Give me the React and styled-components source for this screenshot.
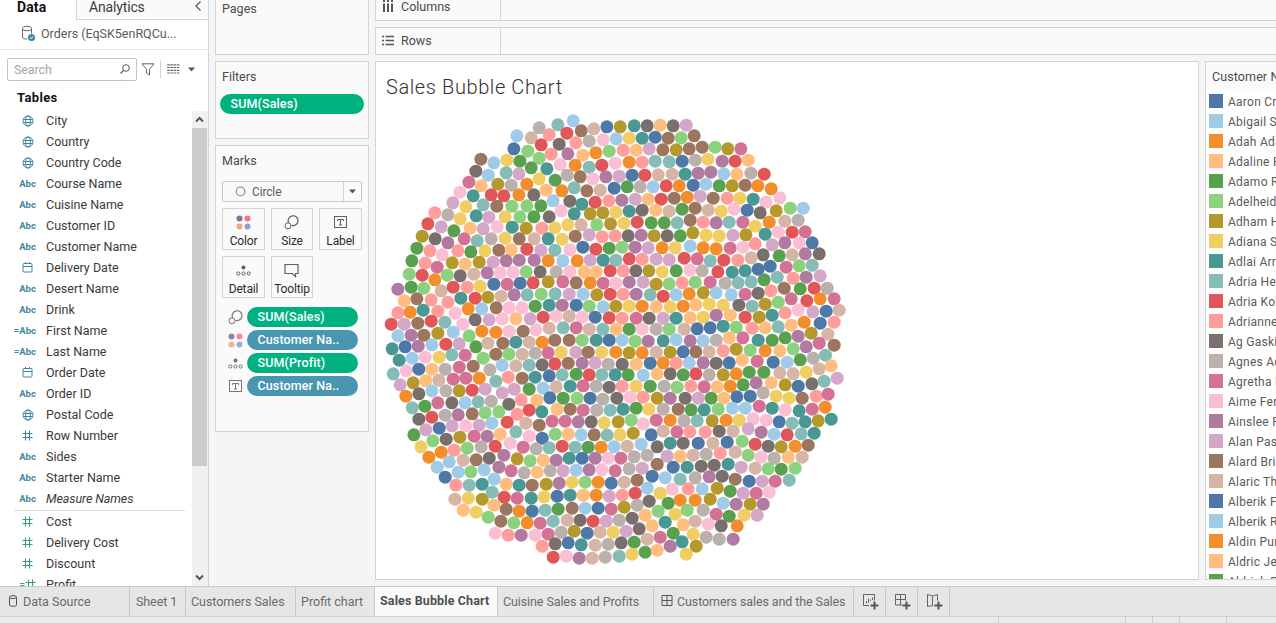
import React from "react";
import styled, { createGlobalStyle, css } from "styled-components";

const GlobalStyle = createGlobalStyle`
  * { box-sizing: border-box; }
  body {
    margin: 0;
    overflow: hidden;
    background: #f5f5f5;
    font-family: Roboto, "Liberation Sans", sans-serif;
    font-size: 13px;
    color: #333;
  }
`;

const LINE = "#d4d4d4";

const Page = styled.div`
  display: flex;
  flex-direction: column;
  width: 1276px;
  height: 623px;
  overflow: hidden;
`;

const Workspace = styled.div`
  display: flex;
  height: 586px;
  overflow: hidden;
`;

/* ---------- data pane ---------- */

const DataPane = styled.aside`
  display: flex;
  flex-direction: column;
  width: 209px;
  flex: none;
  background: #fff;
  border-right: 1px solid ${LINE};
`;

const PaneTabs = styled.div`
  display: flex;
  height: 20px;
`;

const PaneTab = styled.div`
  display: flex;
  align-items: flex-start;
  font-size: 14px;
  ${(p) =>
    p.$active
      ? css`
          width: 76px;
          padding-left: 17px;
          font-weight: 700;
          letter-spacing: 0.1px;
          color: #111;
          line-height: 14px;
        `
      : css`
          flex: 1;
          justify-content: space-between;
          padding-left: 12px;
          padding-right: 6px;
          line-height: 14px;
          letter-spacing: -0.15px;
          color: #3c3c3c;
          background: #fafafa;
          border-left: 1px solid ${LINE};
          border-bottom: 1px solid ${LINE};
        `}
`;

const SourceRow = styled.div`
  display: flex;
  align-items: center;
  gap: 5px;
  height: 30px;
  padding: 0 0 2px 21px;
  border-bottom: 1px solid #e2e2e2;
  color: #5a5a5a;
  font-size: 12.5px;
  letter-spacing: 0;
`;

const SearchRow = styled.div`
  display: flex;
  align-items: center;
  height: 24px;
  margin: 7px 0 0 7px;
`;

const SearchBox = styled.div`
  display: flex;
  align-items: center;
  justify-content: space-between;
  width: 130px;
  height: 23px;
  padding: 0 6px 0 6px;
  border: 1px solid #c4c4c4;
  border-radius: 2px;
  color: #a6a6a6;
  font-size: 12.5px;
  letter-spacing: -0.1px;
`;

const ToolIcons = styled.div`
  display: flex;
  align-items: center;
  margin-left: 4px;
`;

const ThinRule = styled.div`
  width: 1px;
  height: 18px;
  margin: 0 6px 0 5px;
  background: ${LINE};
`;

const TablesHeading = styled.div`
  height: 30px;
  padding-left: 17px;
  line-height: 34px;
  font-weight: 700;
  color: #111;
  letter-spacing: 0.35px;
`;

const FieldArea = styled.div`
  display: flex;
  flex: 1;
  min-height: 0;
`;

const FieldList = styled.div`
  flex: 1;
  overflow: hidden;
`;

const Field = styled.div`
  display: flex;
  align-items: center;
  height: 21px;
  padding-left: 14px;
  padding-bottom: 2px;
  color: #3a3a3a;
  font-size: 12.5px;
  letter-spacing: ${(p) => (p.$italic ? -0.1 : 0)}px;
  font-style: ${(p) => (p.$italic ? "italic" : "normal")};
`;

const FieldIcon = styled.span`
  display: flex;
  align-items: center;
  justify-content: ${(p) => (p.$calc ? "flex-end" : "center")};
  width: ${(p) => (p.$calc ? 22 : 27)}px;
  margin-right: ${(p) => (p.$calc ? 10 : 5)}px;
  font-size: 9.5px;
  font-weight: 700;
  font-style: normal;
  letter-spacing: 0;
  white-space: nowrap;
  color: ${(p) => p.$color};
`;

const FieldDivider = styled.div`
  height: 1px;
  margin: 0 7px 1px 14px;
  background: #dcdcdc;
`;

const ScrollTrack = styled.div`
  display: flex;
  flex-direction: column;
  align-items: flex-start;
  width: 16px;
  background: #f0f0f0;
`;

const ScrollButton = styled.div`
  display: flex;
  align-items: center;
  justify-content: center;
  width: 15px;
  height: 17px;
`;

const ScrollThumb = styled.div`
  width: 15px;
  height: 338px;
  margin-bottom: auto;
  background: #cbcbcb;
`;

/* ---------- shelf cards ---------- */

const CardColumn = styled.div`
  display: flex;
  flex-direction: column;
  gap: 6px;
  width: 154px;
  flex: none;
  margin-left: 6px;
`;

const Card = styled.section`
  height: ${(p) => p.$h}px;
  padding: ${(p) => p.$pad ?? 7}px 4px 0;
  background: #fafafa;
  border: 1px solid ${LINE};
  border-top-width: ${(p) => (p.$cut ? 0 : 1)}px;
`;

const CardTitle = styled.div`
  height: 16px;
  padding-left: 2px;
  line-height: 16px;
  font-size: 12.5px;
  color: #4a4a4a;
  letter-spacing: 0;
`;

const Pill = styled.div`
  width: ${(p) => p.$w}px;
  height: 20px;
  padding-left: 10.5px;
  border-radius: 10px;
  line-height: 20px;
  font-size: 12.5px;
  font-weight: 500;
  letter-spacing: 0.12px;
  color: #fff;
  background: ${(p) => (p.$measure ? "#00b180" : "#4996b2")};
`;

const FilterPill = styled(Pill)`
  margin: 9px 0 0 0;
`;

const MarkSelect = styled.div`
  display: flex;
  align-items: center;
  width: 140px;
  height: 21px;
  margin: 12px 0 0 2px;
  padding-left: 12px;
  border: 1px solid #c8c8c8;
  border-radius: 2px;
  color: #5a5a5a;
  font-size: 12px;
  letter-spacing: -0.15px;
`;

const MarkName = styled.span`
  flex: 1;
  padding-left: 6px;
`;

const SelectArrow = styled.span`
  display: flex;
  align-items: center;
  justify-content: center;
  width: 18px;
  height: 19px;
  border-left: 1px solid ${LINE};
`;

const MarkButtons = styled.div`
  display: grid;
  grid-template-columns: 43px 42px 43px;
  grid-auto-rows: 42px;
  gap: 6px;
  margin: 6px 0 0 2px;
`;

const MarkButton = styled.div`
  display: flex;
  flex-direction: column;
  align-items: center;
  justify-content: space-between;
  padding: 6px 0 0;
  border: 1px solid ${LINE};
  font-size: 12px;
  letter-spacing: -0.15px;
  line-height: 15px;
  color: #2c2c2c;
  svg { display: block; margin-right: 1px; }
`;

const Encodings = styled.div`
  display: flex;
  flex-direction: column;
  gap: 3px;
  margin-top: 9px;
  padding-left: 8px;
`;

const Encoding = styled.div`
  display: flex;
  align-items: center;
  gap: 4px;
  height: 20px;
  svg { opacity: 0.85; }
`;

/* ---------- view ---------- */

const ViewColumn = styled.div`
  display: flex;
  flex-direction: column;
  gap: 6px;
  flex: 1;
  min-width: 0;
  margin-left: 6px;
`;

const Shelf = styled.div`
  display: flex;
  height: ${(p) => (p.$cut ? 21 : 28)}px;
  background: #fafafa;
  border: 1px solid ${LINE};
  border-right: 0;
  border-top-width: ${(p) => (p.$cut ? 0 : 1)}px;
`;

const ShelfLabel = styled.div`
  display: flex;
  align-items: center;
  gap: 7px;
  width: 125px;
  padding-left: 6px;
  padding-bottom: ${(p) => (p.$cut ? 8 : 2)}px;
  border-right: 1px solid ${LINE};
  font-size: 12.5px;
  color: #4a4a4a;
  letter-spacing: 0;
`;

const ViewRow = styled.div`
  display: flex;
  gap: 6px;
  height: 519px;
`;

const Sheet = styled.div`
  width: 824px;
  flex: none;
  background: #fff;
  border: 1px solid ${LINE};
`;

const SheetTitle = styled.h1`
  height: 43px;
  margin: 0;
  padding: 9px 0 0 10px;
  font-size: 20px;
  line-height: 32px;
  font-weight: 300;
  letter-spacing: 0.6px;
  color: #333;
`;

const Bubbles = styled.svg`
  display: block;
`;

const Legend = styled.div`
  flex: 1;
  min-width: 0;
  overflow: hidden;
  background: #fff;
  border: 1px solid ${LINE};
  border-right: 0;
  white-space: nowrap;
`;

const LegendTitle = styled.div`
  height: 29px;
  padding-left: 6px;
  line-height: 29px;
  background: #fafafa;
  color: #4a4a4a;
  font-size: 12.5px;
  letter-spacing: 0.1px;
`;

const LegendItem = styled.div`
  display: flex;
  align-items: center;
  gap: 5px;
  height: 20px;
  padding: 2px 0 0 3px;
  font-size: 12px;
  letter-spacing: 0.25px;
  color: #5a5a5a;
`;

const Swatch = styled.span`
  flex: none;
  width: 14px;
  height: 14px;
  margin-bottom: 2px;
  background: ${(p) => p.$color};
`;

/* ---------- bottom ---------- */

const SheetTabs = styled.nav`
  display: flex;
  height: 31px;
  background: #e6e6e6;
  border-top: 1px solid #c8c8c8;
  border-bottom: 1px solid #cfcfcf;
`;

const SheetTab = styled.div`
  display: flex;
  align-items: center;
  gap: ${(p) => p.$gap ?? 4}px;
  width: ${(p) => p.$w}px;
  padding-left: ${(p) => p.$pad ?? 5}px;
  border-right: 1px solid #c8c8c8;
  font-size: 12.5px;
  letter-spacing: ${(p) => p.$ls ?? 0}px;
  white-space: nowrap;
  color: ${(p) => (p.$active ? "#4f4f4f" : "#6a6a6a")};
  font-weight: ${(p) => (p.$active ? 700 : 400)};
  background: ${(p) => (p.$active ? "#fafafa" : "transparent")};
  padding-bottom: ${(p) => (p.$active ? 2 : 0)}px;
`;

const StatusBar = styled.footer`
  display: flex;
  flex: 1;
  background: #ebebeb;
`;

const StatusCell = styled.div`
  width: ${(p) => p.$w}px;
  border-right: 1px solid #cfcfcf;
`;

/* ---------- icons ---------- */

const Globe = () => (
  <svg width="12" height="12" viewBox="0 0 12 12" fill="none" stroke="#3f86a0">
    <circle cx="6" cy="6" r="5" />
    <ellipse cx="6" cy="6" rx="2.3" ry="5" />
    <path d="M1.2 4.5h9.6M1.2 7.5h9.6" />
  </svg>
);

const Hash = ({ color }) => (
  <svg width="11" height="11" viewBox="0 0 11 11" stroke={color} strokeWidth="1.1">
    <path d="M3.5 .5v10M7.5 .5v10M.5 3.5h10M.5 7.5h10" />
  </svg>
);

const Calendar = () => (
  <svg width="11" height="11" viewBox="0 0 11 11" fill="none" stroke="#3f86a0">
    <rect x="1" y="1.500" width="9" height="8.500" rx="1" />
    <path d="M1 4.500h9M3.500 0v2M7.500 0v2" />
  </svg>
);

const Database = () => (
  <svg width="15" height="17" viewBox="0 0 15 17" fill="none" stroke="#666">
    <path d="M1.5 3.5v8.7c0 1.2 2.2 1.9 4.5 1.9M10.500 3.500v5" />
    <ellipse cx="6" cy="3.500" rx="4.500" ry="2.200" />
    <circle cx="10.500" cy="12.500" r="3.600" fill="#3f86a8" stroke="none" />
    <path d="M8.900 12.500l1.200 1.200 2-2.300" stroke="#fff" />
  </svg>
);

const Magnifier = () => (
  <svg width="10" height="10" viewBox="0 0 10 10" fill="none" stroke="#555">
    <circle cx="6" cy="4" r="3.300" />
    <path d="M3.600 6.400L.5 9.500" strokeWidth="1.200" />
  </svg>
);

const Funnel = () => (
  <svg width="14" height="13" viewBox="0 0 14 13" fill="none" stroke="#666">
    <path d="M1 .8h12L8.500 6.300v5.700L5.500 10V6.300z" />
  </svg>
);

const ListGrid = () => (
  <svg width="13" height="10" viewBox="0 0 13 10" stroke="#666" strokeWidth="1.200" strokeDasharray="2.500 .7">
    <path d="M.2 .8h12.500M.2 3.500h12.500M.2 6.300h12.500M.2 9h12.500" />
  </svg>
);

const Caret = () => (
  <svg width="7" height="5" viewBox="0 0 7 5" fill="#555">
    <path d="M0 .5h7L3.500 4.500z" />
  </svg>
);

const ViewCaret = styled.span`
  display: flex;
  margin-left: 8px;
`;

const Chevron = ({ d, w, h, sw = 1.2 }) => (
  <svg width={w} height={h} viewBox={`0 0 ${w} ${h}`} fill="none" stroke="#555" strokeWidth={sw}>
    <path d={d} />
  </svg>
);

const ColorDots = () => (
  <svg width="15" height="15" viewBox="0 0 15 15">
    <circle cx="3.500" cy="3.500" r="3" fill="#84709b" />
    <circle cx="11.500" cy="3.500" r="3" fill="#fb7185" />
    <circle cx="3.500" cy="11.500" r="3" fill="#f4a77c" />
    <circle cx="11.500" cy="11.500" r="3" fill="#81a5cf" />
  </svg>
);

const SizeIcon = () => (
  <svg width="15" height="15" viewBox="0 0 15 15" fill="none" stroke="#5f5f5f">
    <path d="M4.700 7.800A4.900 4.900 0 1 1 7.300 10.200" strokeWidth="1.200" />
    <circle cx="4" cy="10.800" r="3" />
  </svg>
);

const LabelIcon = () => (
  <svg width="15" height="15" viewBox="0 0 15 15" fill="none" stroke="#5f5f5f">
    <rect x="1.500" y="1.500" width="12" height="11" />
    <path d="M4.500 6v-1.500h6v1.500M7.500 4.500v5.500M6 10h3" />
  </svg>
);

const DetailIcon = () => (
  <svg width="15" height="15" viewBox="0 0 15 15" fill="none" stroke="#5f5f5f">
    <circle cx="7.500" cy="4.500" r="2" fill="#5f5f5f" stroke="none" />
    <circle cx="2.300" cy="10.500" r="1.600" />
    <circle cx="7.500" cy="10.500" r="1.600" />
    <circle cx="12.700" cy="10.500" r="1.600" />
  </svg>
);

const TooltipIcon = () => (
  <svg width="15" height="15" viewBox="0 0 15 15" fill="none" stroke="#5f5f5f" strokeWidth="1.200">
    <path d="M1 1.500h13v9h-2.500v3L8.300 10.500H1z" />
  </svg>
);

const ColumnsIcon = () => (
  <svg width="12" height="12" viewBox="0 0 12 12" stroke="#555" strokeWidth="2">
    <path d="M2 0v2M6 0v2M10 0v2M2 3.500v8.500M6 3.500v8.500M10 3.500v8.500" />
  </svg>
);

const RowsIcon = () => (
  <svg width="12" height="11" viewBox="0 0 12 11" stroke="#555" strokeWidth="1.700">
    <path d="M0 1.500h2M0 5.500h2M0 9.500h2M3.500 1.500H12M3.500 5.500H12M3.500 9.500H12" />
  </svg>
);

const Cylinder = () => (
  <svg width="10" height="14" viewBox="0 0 10 14" fill="none" stroke="#555">
    <path d="M1.500 2.500v7.500c0 .8 1 1.200 3.500 1.200s3.500-.4 3.500-1.200V2.500" />
    <ellipse cx="5" cy="2.100" rx="3.500" ry="1.500" />
  </svg>
);

const DashGrid = () => (
  <svg width="12" height="13" viewBox="0 0 12 13" fill="none" stroke="#555">
    <path d="M1 .5h10v10H1zM6 .5v10M1 5.500h10" />
  </svg>
);

const NewTab = ({ children }) => (
  <svg width="17" height="17" viewBox="0 0 17 17" fill="none" stroke="#666">
    {children}
    <path d="M12.500 8.500v8M8.500 12.500h8" stroke="#555" strokeWidth="2" />
  </svg>
);

/* ---------- data ---------- */

const PALETTE = {
  a: "#4e79a7", b: "#a0cbe8", c: "#f28e2b", d: "#ffbe7d", e: "#59a14f",
  f: "#8cd17d", g: "#b6992d", h: "#f1ce63", i: "#499894", j: "#86bcb6",
  k: "#e15759", l: "#ff9d9a", m: "#79706e", n: "#bab0ac", o: "#d37295",
  p: "#fabfd2", q: "#b07aa1", r: "#d4a6c8", s: "#9d7660", t: "#d7b5a6",
};

/* Packed bubbles per cluster: "x,y" in thirds of a pixel from the cluster origin, then a palette key. */
const CLUSTERS = [
  {
    x: 380, y: 105,
    marks: `579,47b 533,59j 477,68n 680,65a 641,71t 603,77s 560,84k 507,89l 410,92b 453,98t 627,108n 669,104p 587,113l 537,117m 483,119k 401,131a 443,138f 419,168e 513,147l 563,146q 608,150d 647,143c 687,138f 302,162s 341,173b 380,165h 477,159f 453,188e 500,191i 540,178p 585,180c 627,186j 665,180k 287,198m 324,210b 378,203j 416,206r 477,221h 525,225e 561,210n 600,215s 638,221p 677,215q 266,231o 303,242d 353,237g 393,240n 440,237c 498,255d 545,257c 582,248j 620,257s 660,255t
239,261p 279,272i 333,269k 371,272k 416,269c 461,269m 519,287b 569,288m 605,297i 645,291k 686,287l 218,293r 257,305h 309,299j 350,303s 395,303f 440,302f 482,302e 543,317p 582,326i 630,326g 668,323g
164,323l 203,329n 240,341h 288,332i 326,336r 375,335h 419,335f 461,335e 507,335m 143,356k 183,365r 221,377e 270,369d 309,371r 351,365p 396,366i 438,369g 485,369l 524,368h 563,359h 603,359t 650,359f 691,356g
126,393g 165,401m 203,413q 252,401o 291,407j 333,401n 375,399h 417,401s 462,401t 504,401i 546,402h 585,393s 627,389r 666,395l 110,429e 149,437l 186,449p 233,437l 272,440e 314,437h 356,435s 393,434d 440,432k 482,435r 524,435j 569,434p 608,426a 647,432k 687,429e`,
  },
  {
    x: 610, y: 105,
    marks: `30,65g 72,62i 111,62m 150,60d 189,62m 228,60r 18,101b 57,99h 96,99i 135,96a 174,99s 213,98f 252,92s 39,135l 78,135d 117,131r 158,134s 198,134g 237,131s 276,126s 315,126f 353,131g 392,131o
15,174p 57,171c 96,171l 135,168j 177,170j 216,168a 255,165n 293,162h 336,168q 375,168k 414,165d 27,213r 66,210a 104,210k 144,209t 186,207t 225,207i 264,204q 302,201q 341,206b 380,207d 422,204n 462,207k
12,249a 51,245e 90,245n 129,245b 168,242k 207,242c 249,240a 287,237b 327,242e 366,242g 405,240s 443,242c 483,251c 35,285q 75,282r 114,282d 153,282k 192,279s 231,276c 270,273r 309,279s 351,279l 389,279h 429,282i 467,291p 509,278p
17,321h 57,318i 96,315m 137,315d 177,318t 216,312e 255,309s 294,315t 333,318h 372,312p 411,315a 450,323m 498,317g 540,309f 579,309b 41,354h 81,351k 123,353e 162,353e 201,353j 240,345s 279,351l 318,353q 357,351j 398,351o 435,363h 477,351c 524,348t 564,345n
15,392l 54,392m 93,390q 132,392g 171,392m 210,392e 248,383g 288,390h 327,392h 368,390r 407,389g 465,387i 504,381p 546,381k 585,380o 36,426f 75,426q 114,428r 156,428c 195,428h 240,423b 279,428c 318,431c 360,429o 398,426p 435,416l 486,419r 524,413q 567,413p 606,413a 459,449m 507,452e 546,449t 585,446q 627,446m`,
  },
  {
    x: 380, y: 255,
    marks: `95,17e 135,24l 171,36o 216,23g 255,27d 297,21g 339,21r 378,17q 417,15q 462,15q 504,17c 548,17b 591,17c 630,15r 669,15i 87,57f 126,60k 164,74c 201,60f 240,62m 281,57t 321,53q 360,53p 399,51p 438,50f 480,50m 528,50n 569,50p 612,50d 648,50d 690,47k
93,96e 53,102q 131,99f 183,107t 219,96k 261,96l 300,93h 341,87a 381,87o 420,84a 459,83k 504,80g 548,80o 588,83s 630,83c 669,84o 72,137d 110,131s 153,134l 203,141l 242,129i 285,129k 323,126g 363,123t 402,119q 441,119j 483,117f 525,116j 567,117r 609,117b 650,119g 690,117k
53,173l 90,171c 129,165i 173,168l 225,174p 264,161c 305,161b 348,158s 387,158p 426,158p 465,153e 507,150i 546,150q 588,150a 627,153f 669,155b 33,207k 72,207r 113,204s 153,198k 194,201j 248,207p 285,194m 327,194r 366,191p 407,191d 450,191r 489,186k 528,183p 567,183t 606,186p 645,186a 687,188k
53,242b 93,240q 131,240s 173,234g 219,231b 267,242f 305,228c 347,231c 387,228p 429,228s 467,224p 507,219t 549,218j 588,218o 627,222t 668,222j 36,281i 75,275a 114,273q 155,269b 197,267k 237,266r 287,275e 323,264t 368,264s 407,261i 447,261t 486,261c 524,255s 567,255s 606,255f 648,255i 687,255a
57,315i 96,309b 135,306p 177,306h 215,299j 255,300o 309,309f 347,297s 386,297f 426,297t 465,294n 504,293o 543,291h 587,291r 624,291s 665,291h 39,356j 78,347p 116,342a 155,342d 195,342n 237,336o 279,333s 329,344n 366,330b 407,332t 447,330j 486,329m 524,326k 564,324s 606,324q 645,323r 684,327n
60,389r 99,383g 137,377d 176,375t 219,372o 257,369o 297,369c 347,378j 384,366l 426,369s 465,366i 507,362a 546,359j 588,357e 627,359k 665,359j 77,423c 116,416m 155,407b 197,407n 237,407g 276,405k 315,402r 366,413r 402,402r 447,402e 489,399b 528,395t 570,393i 609,392o 648,393n 687,396m
96,458j 134,453e 173,443o 215,443m 255,443b 294,440j 333,438n 386,447m 423,434l 470,435d 509,428a 549,429e 591,429f 630,429a 668,432n`,
  },
  {
    x: 610, y: 255,
    marks: `17,15j 57,11k 96,12l 138,12r 177,14r 222,9k 261,11o 300,17j 341,15k 383,15l 423,8t 39,47l 77,47m 116,47g 156,50h 198,47e 239,45p 276,47n 323,50k 366,51i 405,47i 444,42a 480,33a 528,36o 567,32f 606,30j
17,84p 57,81q 99,81r 138,87g 177,86f 216,83l 255,81f 300,81o 345,84n 384,83j 423,80j 462,74e 501,66j 549,69l 588,66q 630,62r 39,117l 78,117q 120,119j 159,123k 198,119b 237,116c 279,113g 318,113b 363,119b 405,117o 444,114m 482,107l 522,99s 570,101e 612,99k 651,99n
17,153g 57,153h 96,153c 138,155d 180,155h 219,153c 257,149d 297,147h 339,150h 386,150m 426,153j 465,147g 504,141f 543,131o 590,137k 630,131c 672,131o 36,189l 78,189o 117,189m 159,189r 198,189i 240,188d 279,186h 318,180q 360,180d 405,186k 447,186g 486,180i 525,173l 564,164p 608,170r 648,168a 687,165t
18,222d 57,222e 96,222p 138,222n 177,222f 222,222t 261,221a 300,218a 339,213i 378,216f 426,219l 465,218d 504,215j 543,210d 582,201c 630,204a 672,201l 36,255b 75,258f 114,258q 159,257i 198,254b 240,257q 279,257b 318,255n 357,248d 398,248o 444,255i 486,255e 525,248e 564,243q 603,234g 653,237t
17,291c 57,293g 96,293c 138,291t 180,291g 219,290a 257,290s 297,290t 339,287l 378,282g 420,285f 465,287c 509,287d 549,281f 588,275q 627,264o 672,270s 36,327m 78,327d 120,324a 159,323c 198,324l 237,323b 279,323q 318,324m 357,323a 396,315d 441,318o 489,321a 531,321b 570,314e 609,309n 646,300j
15,359i 54,359e 99,360b 141,356d 180,356m 219,359e 257,356k 297,359n 339,359g 378,356c 417,351e 461,351e 509,353t 549,356t 588,351h 627,341t 663,332d 36,393l 78,393h 120,393e 162,393n 201,396f 242,393l 282,395o 321,395d 360,393c 399,389e 438,383q 483,383d 525,389g 564,393a 605,386m 642,378j 681,369r
20,429m 60,426p 99,426l 141,429g 180,429q 225,429m 264,429r 303,429e 341,429d 380,425a 420,423a 459,413n 498,423h 537,429h 576,429s 618,423l 654,417o`,
  },
  {
    x: 380, y: 405,
    marks: `447,15k 485,20i 531,12d 570,12s 609,15o 650,15n 690,15j 729,12i 768,9e 806,12h 849,12n 894,12s 933,14e 972,14i 1014,12f 1057,9b 1095,9b 1137,3o 1176,9i 1215,14p 1257,17i 1296,12o 1335,6c 116,42m 155,36k 195,30n 234,29q 276,26s 315,23f 356,20f 411,27l 437,54t 477,60s 381,51k 335,54b 297,60r 257,62p 216,62r 177,69a 137,74r 101,89e
516,48o 555,48o 594,50q 633,50m 672,53h 714,50g 753,45f 789,56p 828,45o 870,45c 912,47n 951,47j 996,47g 1038,45c 1077,45h 1119,41p 1158,45p 1197,50a 1236,54j 1275,50i 1314,47g 1353,42i
122,125h 158,107f 198,102m 239,96g 282,93o 321,93q 360,87d 407,80j 447,93p 486,99a 525,87f 564,87d 603,89b 642,89s 681,90j 719,89h 759,84g 813,89a 849,78t 890,80o 929,80l 975,81l 1017,78m 1059,78t 1104,71r 1143,81q 1182,87b 1221,89k 1263,86j 1302,84i
146,156c 183,141c 222,135l 261,129f 303,125n 345,123k 390,114p 429,126o 468,131n 507,128j 546,123k 585,126j 624,126e 663,126c 702,125b 741,123t 783,117b 831,125m 870,114i 909,114m 954,114a 998,114t 1041,111a 1086,108f 1125,117k 1164,123m 1203,125g 1245,123c 1284,120s
171,186b 207,170b 249,165t 288,164s 327,159m 371,150q 411,161g 450,167f 489,165d 528,165q 567,159i 606,159a 645,159q 684,159p 722,159o 762,155n 801,150n 861,153r 900,153d 939,150t 978,147n 1020,144l 1065,141t 1104,150f 1143,156p 1182,159n 1224,156d 1266,156t
195,216a 234,201b 272,200f 312,194b 356,186q 393,197o 432,203n 471,201d 510,197n 549,197r 588,195b 627,194q 665,194p 705,197o 747,191n 786,189r 831,177s 879,186a 921,186i 963,183m 1002,180m 1044,177i 1083,186r 1125,189t 1164,191f 1203,192e 1245,189f
227,240l 267,240j 306,237i 342,222b 378,237d 417,240i 456,240s 498,237g 537,234q 576,231h 615,231f 654,231c 693,234a 732,231t 771,225s 816,213a 855,218b 900,222j 945,218n 987,215q 1026,213m 1065,222s 1107,228a 1146,228r 1185,228o 1227,225j
224,282t 264,279h 306,282g 336,261j 372,276k 411,279o 453,279i 492,275h 531,273a 570,270i 609,270d 648,270c 687,273r 726,270l 765,264k 801,249b 840,264h 876,252p 924,251l 966,251b 1011,249g 1050,258e 1089,264r 1128,264o 1167,261p
249,315d 288,321h 324,336f 341,300d 378,312s 417,318c 456,318a 495,315j 534,312e 576,309s 615,309b 654,309a 693,312o 732,306g 771,300n 807,288m 864,294e 900,285c 945,285c 990,282g 1029,294b 1068,297q 1110,297g 1149,297q
362,348s 401,353f 441,353c 480,354o 519,348j 561,345t 600,345m 639,348k 678,348r 717,345n 756,339m 795,330d 834,318f 885,327h 921,315f 969,315n 1008,327o 1047,333e 1092,330h 1131,330r
345,384p 384,390l 423,390q 465,390p 504,387o 543,381n 582,378g 621,384a 660,381t 699,381h 738,378r 777,371m 816,362d 855,351i 909,359d 945,348t 984,357p 1023,362m 1071,362c
486,423l 525,416m 564,413a 603,419i 645,420t 684,417n 723,413m 762,411e 801,402t 840,396o 879,384e 939,387h 978,396n 1017,402n 1059,402q 519,456k 558,453p 597,459q 636,459t 675,456n 717,453j 756,447h 795,441e 831,435d 870,423q 906,410i 948,423g 918,447h`,
  },
];

const BUBBLES = CLUSTERS.flatMap(({ x, y, marks }) =>
  marks.split(/\s+/).map((m) => {
    const [mx, my] = m.slice(0, -1).split(",").map(Number);
    return { x: x + mx / 3 + 0.2, y: y + my / 3 + 0.2, fill: PALETTE[m.slice(-1)] };
  })
);

const BLUE = "#3f86a0";
const GREEN = "#3a9b78";

const DIMENSIONS = [
  ["geo", "City"], ["geo", "Country"], ["geo", "Country Code"], ["abc", "Course Name"],
  ["abc", "Cuisine Name"], ["abc", "Customer ID"], ["abc", "Customer Name"],
  ["date", "Delivery Date"], ["abc", "Desert Name"], ["abc", "Drink"],
  ["calc", "First Name"], ["calc", "Last Name"], ["date", "Order Date"],
  ["abc", "Order ID"], ["geo", "Postal Code"], ["num", "Row Number"],
  ["abc", "Sides"], ["abc", "Starter Name"], ["abc", "Measure Names", true],
];

const MEASURES = [["num", "Cost"], ["num", "Delivery Cost"], ["num", "Discount"], ["calcnum", "Profit"]];

const CUSTOMERS = [
  "Aaron Cross", "Abigail Stone", "Adah Adams", "Adaline Pratt", "Adamo Rossi",
  "Adelheid Marx", "Adham Hale", "Adiana Shaw", "Adlai Arrow", "Adria Head",
  "Adria Kohl", "Adrianne Lee", "Ag Gaskin", "Agnes Ada", "Agretha Lane",
  "Aime Ferris", "Ainslee Ford", "Alan Pascoe", "Alard Brice", "Alaric Thorn",
  "Alberik Finn", "Alberik Rowe", "Aldin Purdy", "Aldric Jenks", "Aldrich Page",
];

const glyph = (kind, color) =>
  ({
    geo: <Globe />,
    abc: "Abc",
    calc: "=Abc",
    date: <Calendar />,
    num: <Hash color={color} />,
    calcnum: <>=<Hash color={color} /></>,
  })[kind];

const FieldRow = ({ kind, name, italic, color }) => (
  <Field $italic={italic}>
    <FieldIcon $color={color} $calc={kind.startsWith("calc")}>{glyph(kind, color)}</FieldIcon>
    {name}
  </Field>
);

const BUTTONS = [
  ["Color", ColorDots], ["Size", SizeIcon], ["Label", LabelIcon],
  ["Detail", DetailIcon], ["Tooltip", TooltipIcon],
];

const ENCODINGS = [
  [SizeIcon, "SUM(Sales)", true], [ColorDots, "Customer Na..", false],
  [DetailIcon, "SUM(Profit)", true], [LabelIcon, "Customer Na..", false],
];

export default function App() {
  const colors = Object.values(PALETTE);
  return (
    <Page>
      <GlobalStyle />
      <Workspace>
        <DataPane>
          <PaneTabs>
            <PaneTab $active>Data</PaneTab>
            <PaneTab>
              Analytics
              <Chevron d="M6.500 1.500L2 6l4.500 4.500" w={8} h={12} />
            </PaneTab>
          </PaneTabs>
          <SourceRow><Database />Orders (EqSK5enRQCu...</SourceRow>
          <SearchRow>
            <SearchBox>Search<Magnifier /></SearchBox>
            <ToolIcons>
              <Funnel />
              <ThinRule />
              <ListGrid />
              <ViewCaret><Caret /></ViewCaret>
            </ToolIcons>
          </SearchRow>
          <TablesHeading>Tables</TablesHeading>
          <FieldArea>
            <FieldList>
              {DIMENSIONS.map(([kind, name, italic]) => (
                <FieldRow key={name} kind={kind} name={name} italic={italic} color={BLUE} />
              ))}
              <FieldDivider />
              {MEASURES.map(([kind, name]) => (
                <FieldRow key={name} kind={kind} name={name} color={GREEN} />
              ))}
            </FieldList>
            <ScrollTrack>
              <ScrollButton><Chevron d="M1 5.500l3.500-3.500 3.500 3.500" w={9} h={7} sw={2} /></ScrollButton>
              <ScrollThumb />
              <ScrollButton><Chevron d="M1 1.500l3.500 3.500 3.500-3.500" w={9} h={7} sw={2} /></ScrollButton>
            </ScrollTrack>
          </FieldArea>
        </DataPane>

        <CardColumn>
          <Card $h={55} $pad={1} $cut><CardTitle>Pages</CardTitle></Card>
          <Card $h={78}>
            <CardTitle>Filters</CardTitle>
            <FilterPill $w={144} $measure>SUM(Sales)</FilterPill>
          </Card>
          <Card $h={287}>
            <CardTitle>Marks</CardTitle>
            <MarkSelect>
              <svg width="11" height="11" viewBox="0 0 11 11" fill="none" stroke="#999" strokeWidth="1.300">
                <circle cx="5.500" cy="5.500" r="4.300" />
              </svg>
              <MarkName>Circle</MarkName>
              <SelectArrow><Caret /></SelectArrow>
            </MarkSelect>
            <MarkButtons>
              {BUTTONS.map(([name, Icon]) => (
                <MarkButton key={name}><Icon />{name}</MarkButton>
              ))}
            </MarkButtons>
            <Encodings>
              {ENCODINGS.map(([Icon, text, measure], i) => (
                <Encoding key={i}><Icon /><Pill $w={111} $measure={measure}>{text}</Pill></Encoding>
              ))}
            </Encodings>
          </Card>
        </CardColumn>

        <ViewColumn>
          <Shelf $cut><ShelfLabel $cut><ColumnsIcon />Columns</ShelfLabel></Shelf>
          <Shelf><ShelfLabel><RowsIcon />Rows</ShelfLabel></Shelf>
          <ViewRow>
            <Sheet>
              <SheetTitle>Sales Bubble Chart</SheetTitle>
              <Bubbles width="822" height="474" viewBox="376 105 822 474">
                {BUBBLES.map((b, i) => (
                  <circle key={i} cx={b.x} cy={b.y} r="6.5" fill={b.fill} />
                ))}
              </Bubbles>
            </Sheet>
            <Legend>
              <LegendTitle>Customer Name</LegendTitle>
              {CUSTOMERS.map((name, i) => (
                <LegendItem key={name}><Swatch $color={colors[i % colors.length]} />{name}</LegendItem>
              ))}
            </Legend>
          </ViewRow>
        </ViewColumn>
      </Workspace>

      <SheetTabs>
        <SheetTab $w={130} $pad={8} $gap={5}><Cylinder />Data Source</SheetTab>
        <SheetTab $w={56} $pad={6} $ls={-0.1}>Sheet 1</SheetTab>
        <SheetTab $w={110} $ls={-0.05}>Customers Sales</SheetTab>
        <SheetTab $w={79}>Profit chart</SheetTab>
        <SheetTab $w={123} $active $ls={0.12}>Sales Bubble Chart</SheetTab>
        <SheetTab $w={156} $ls={-0.1}>Cuisine Sales and Profits</SheetTab>
        <SheetTab $w={200} $pad={7} $ls={-0.1}><DashGrid />Customers sales and the Sales</SheetTab>
        <SheetTab $w={32} $pad={8}>
          <NewTab><path d="M7 12.500H1.500V1.500h11v6M4.500 10V8M6.500 10V5.500M8.500 8V6.500M10.500 7V4.500" /></NewTab>
        </SheetTab>
        <SheetTab $w={32} $pad={8}>
          <NewTab><path d="M8 12H1.500V1.500h10v6M6.500 1.500V12M1.500 6.500h10" /></NewTab>
        </SheetTab>
        <SheetTab $w={32} $pad={8}>
          <NewTab><path d="M7.500 13L6.500 12.500 1.500 13.500V1.500L6.500 3l5-1.500v6M6.500 3v9.500" /></NewTab>
        </SheetTab>
      </SheetTabs>
      <StatusBar>
        <StatusCell $w={999} />
        <StatusCell $w={127} />
        <StatusCell $w={27} />
        <StatusCell $w={27} />
        <StatusCell $w={47} />
      </StatusBar>
    </Page>
  );
}
